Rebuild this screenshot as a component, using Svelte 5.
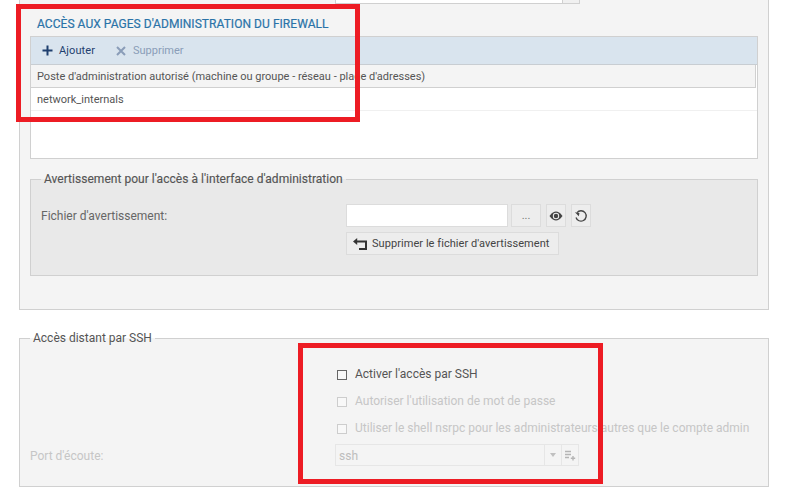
<script>
  const rows = [
    { label: "Activer l'accès par SSH", on: true },
    { label: "Autoriser l'utilisation de mot de passe", on: false },
    { label: "Utiliser le shell nsrpc pour les administrateurs autres que le compte admin", on: false }
  ];
</script>

<div class="page">
  <div class="panel">
    <div class="topselect"><span class="topbtn"></span></div>
    <h2>ACCÈS AUX PAGES D'ADMINISTRATION DU FIREWALL</h2>
    <div class="grid">
      <div class="toolbar">
        <span class="tool add">
          <svg width="11" height="11" viewBox="0 0 11 11"><path d="M5.5 0.5v10M0.5 5.5h10" stroke="#1f3f6e" stroke-width="2"/></svg>
          Ajouter
        </span>
        <span class="tool del">
          <svg width="10" height="10" viewBox="0 0 10 10"><path d="M1 1l8 8M9 1l-8 8" stroke="#8a9db8" stroke-width="2"/></svg>
          Supprimer
        </span>
      </div>
      <div class="head">Poste d'administration autorisé (machine ou groupe - réseau - plage d'adresses)</div>
      <div class="row">network_internals</div>
    </div>

    <fieldset class="warn">
      <legend>Avertissement pour l'accès à l'interface d'administration</legend>
      <div class="warnrow">
        <span class="lbl">Fichier d'avertissement:</span>
        <div class="ctrls">
          <div class="line">
            <span class="input"></span>
            <span class="btn dots">...</span>
            <span class="btn ico">
              <svg width="14" height="10" viewBox="0 0 14 10"><path d="M0.5 5C3 1.5 5 0.5 7 0.5S11 1.5 13.5 5C11 8.5 9 9.5 7 9.5S3 8.5 0.5 5Z" fill="#444"/><circle cx="7" cy="5" r="3.2" fill="#eee"/><circle cx="7" cy="5" r="2.2" fill="#444"/></svg>
            </span>
            <span class="btn ico">
              <svg width="14" height="14" viewBox="0 0 14 14"><path d="M3 3.6A5.2 5.2 0 1 1 2 8.5" fill="none" stroke="#444" stroke-width="1.3"/><path d="M0.6 3.6h4.6v3.4z" fill="#444" transform="rotate(10 3 5)"/></svg>
            </span>
          </div>
          <span class="btn wide">
            <svg width="14" height="12" viewBox="0 0 14 12"><path d="M4 3.5h9v7.5H6" fill="none" stroke="#333" stroke-width="2"/><path d="M0 3.5L4.2 0v7z" fill="#333"/></svg>
            Supprimer le fichier d'avertissement
          </span>
        </div>
      </div>
    </fieldset>
  </div>

  <fieldset class="ssh">
    <legend>Accès distant par SSH</legend>
    <div class="checks">
      {#each rows as r}
        <div class="check" class:off={!r.on}><span class="box"></span>{r.label}</div>
      {/each}
    </div>
    <div class="port">
      <span class="portlbl">Port d'écoute:</span>
      <div class="select">
        <span class="val">ssh</span>
        <span class="arrow"><i></i></span>
        <span class="pick">
          <svg width="12" height="11" viewBox="0 0 12 11"><path d="M1 1.5h6M1 4.5h6M1 7.5h4" stroke="#b5b5b5" stroke-width="1.6"/><path d="M9 6v4.5M6.8 8.2h4.4" stroke="#b5b5b5" stroke-width="1.4"/></svg>
        </span>
      </div>
    </div>
  </fieldset>

  <div class="mark m1"></div>
  <div class="mark m2"></div>
</div>

<style>
  :global(body) {
    margin: 0;
    background: #fff;
  }
  .page {
    position: relative;
    width: 801px;
    height: 502px;
    overflow: hidden;
    font-family: Roboto, "Liberation Sans", sans-serif;
    font-size: 12px;
    color: #444;
    padding-left: 19px;
    box-sizing: border-box;
  }
  .panel {
    box-sizing: border-box;
    width: 750px;
    height: 310px;
    background: #f4f4f4;
    border: 1px solid #d0d0d0;
    border-top: 0;
    padding: 0 10px;
    position: relative;
  }
  .topselect {
    position: absolute;
    left: 315px;
    top: 0;
    box-sizing: border-box;
    width: 245px;
    height: 4px;
    background: #fff;
    border: 1px solid #d0d0d0;
    border-top: 0;
  }
  .topbtn {
    position: absolute;
    right: 0;
    top: 0;
    width: 16px;
    height: 3px;
    background: #f0f0f0;
    border-left: 1px solid #d0d0d0;
  }
  h2 {
    margin: 0;
    padding: 17px 0 0 7px;
    height: 19px;
    font-size: 12px;
    line-height: 14px;
    font-weight: 400;
    letter-spacing: 0.05px;
    color: #2a73a8;
    -webkit-text-stroke: 0.2px #2a73a8;
  }
  .grid {
    box-sizing: border-box;
    width: 728px;
    height: 123px;
    background: #fff;
    border: 1px solid #d0d0d0;
  }
  .toolbar {
    height: 27px;
    background: #d9e4ee;
    border-bottom: 1px solid #c8cdd2;
    display: flex;
    align-items: center;
    padding-left: 11px;
    gap: 21px;
    font-size: 11px;
  }
  .tool {
    display: flex;
    align-items: center;
    gap: 6px;
  }
  .add {
    color: #1f3f6e;
    letter-spacing: 0.1px;
  }
  .del {
    color: #8a9db8;
    gap: 7px;
  }
  .head {
    height: 22px;
    line-height: 24px;
    padding-left: 6px;
    margin-right: 1px;
    background: #f4f4f4;
    border-right: 1px solid #d0d0d0;
    border-bottom: 1px solid #d0d0d0;
    font-size: 11px;
    color: #555;
  }
  .row {
    height: 22px;
    line-height: 24px;
    padding-left: 6px;
    border-bottom: 1px solid #f0f0f0;
    font-size: 11px;
    color: #555;
  }
  fieldset {
    margin: 0;
    box-sizing: border-box;
    border: 1px solid #d0d0d0;
  }
  legend {
    font-size: 12px;
    line-height: 14px;
    color: #555;
    padding: 0 3px;
  }
  .warn {
    width: 728px;
    height: 104px;
    margin-top: 13px;
    padding: 0 10px;
    background: #e9e9e9;
    position: relative;
  }
  .warn legend {
    letter-spacing: 0.03px;
    -webkit-text-stroke: 0.15px #555;
  }
  .warnrow {
    display: flex;
    padding-top: 18px;
  }
  .lbl {
    width: 305px;
    line-height: 25px;
    color: #666;
  }
  .ctrls {
    display: flex;
    flex-direction: column;
    align-items: flex-start;
    gap: 5px;
  }
  .line {
    display: flex;
    gap: 3px;
  }
  .input {
    box-sizing: border-box;
    width: 162px;
    height: 23px;
    background: #fff;
    border: 1px solid #dcdcdc;
  }
  .btn {
    box-sizing: border-box;
    height: 23px;
    background: #ededed;
    border: 1px solid #dcdcdc;
    display: flex;
    align-items: center;
    justify-content: center;
    color: #444;
  }
  .dots {
    width: 30px;
    margin-right: 2px;
    color: #777;
    font-size: 11px;
  }
  .ico {
    width: 20px;
    margin-right: 2px;
  }
  .wide {
    width: 213px;
    gap: 5px;
    font-size: 11px;
    letter-spacing: 0.06px;
    justify-content: flex-start;
    padding-left: 6px;
  }
  .ssh {
    width: 750px;
    height: 156px;
    margin-top: 21px;
    padding: 0 0 0 10px;
    background: #f4f4f4;
    position: relative;
  }
  .checks {
    padding-top: 16px;
    padding-left: 307px;
  }
  .check {
    height: 27px;
    line-height: 27px;
    display: flex;
    align-items: center;
    color: #555;
  }
  .check.off {
    color: #c6c6c6;
  }
  .box {
    box-sizing: border-box;
    width: 10px;
    height: 10px;
    margin-right: 8px;
    border: 1px solid #666;
    background: #f8f8f8;
  }
  .off .box {
    border-color: #cdcdcd;
  }
  .port {
    display: flex;
    align-items: center;
    margin-top: 2px;
  }
  .portlbl {
    width: 305px;
    color: #c6c6c6;
    padding-top: 2px;
  }
  .select {
    box-sizing: border-box;
    width: 244px;
    height: 22px;
    border: 1px solid #e6e6e6;
    display: flex;
    align-items: center;
    color: #bdbdbd;
  }
  .val {
    flex: 1;
    padding: 2px 0 0 3px;
  }
  .arrow {
    box-sizing: border-box;
    width: 17px;
    height: 20px;
    border-left: 1px solid #e6e6e6;
    display: flex;
    align-items: center;
    justify-content: center;
  }
  .arrow i {
    width: 0;
    height: 0;
    border: 3px solid transparent;
    border-top: 4px solid #c0c0c0;
    border-bottom: 0;
  }
  .pick {
    box-sizing: border-box;
    width: 17px;
    height: 20px;
    border-left: 1px solid #e6e6e6;
    display: flex;
    align-items: center;
    justify-content: center;
  }
  .mark {
    position: absolute;
    box-sizing: border-box;
    border: 5px solid #ed1c24;
  }
  .m1 {
    left: 16px;
    top: 4px;
    width: 344px;
    height: 118px;
  }
  .m2 {
    left: 298px;
    top: 343px;
    width: 305px;
    height: 141px;
  }
</style>
